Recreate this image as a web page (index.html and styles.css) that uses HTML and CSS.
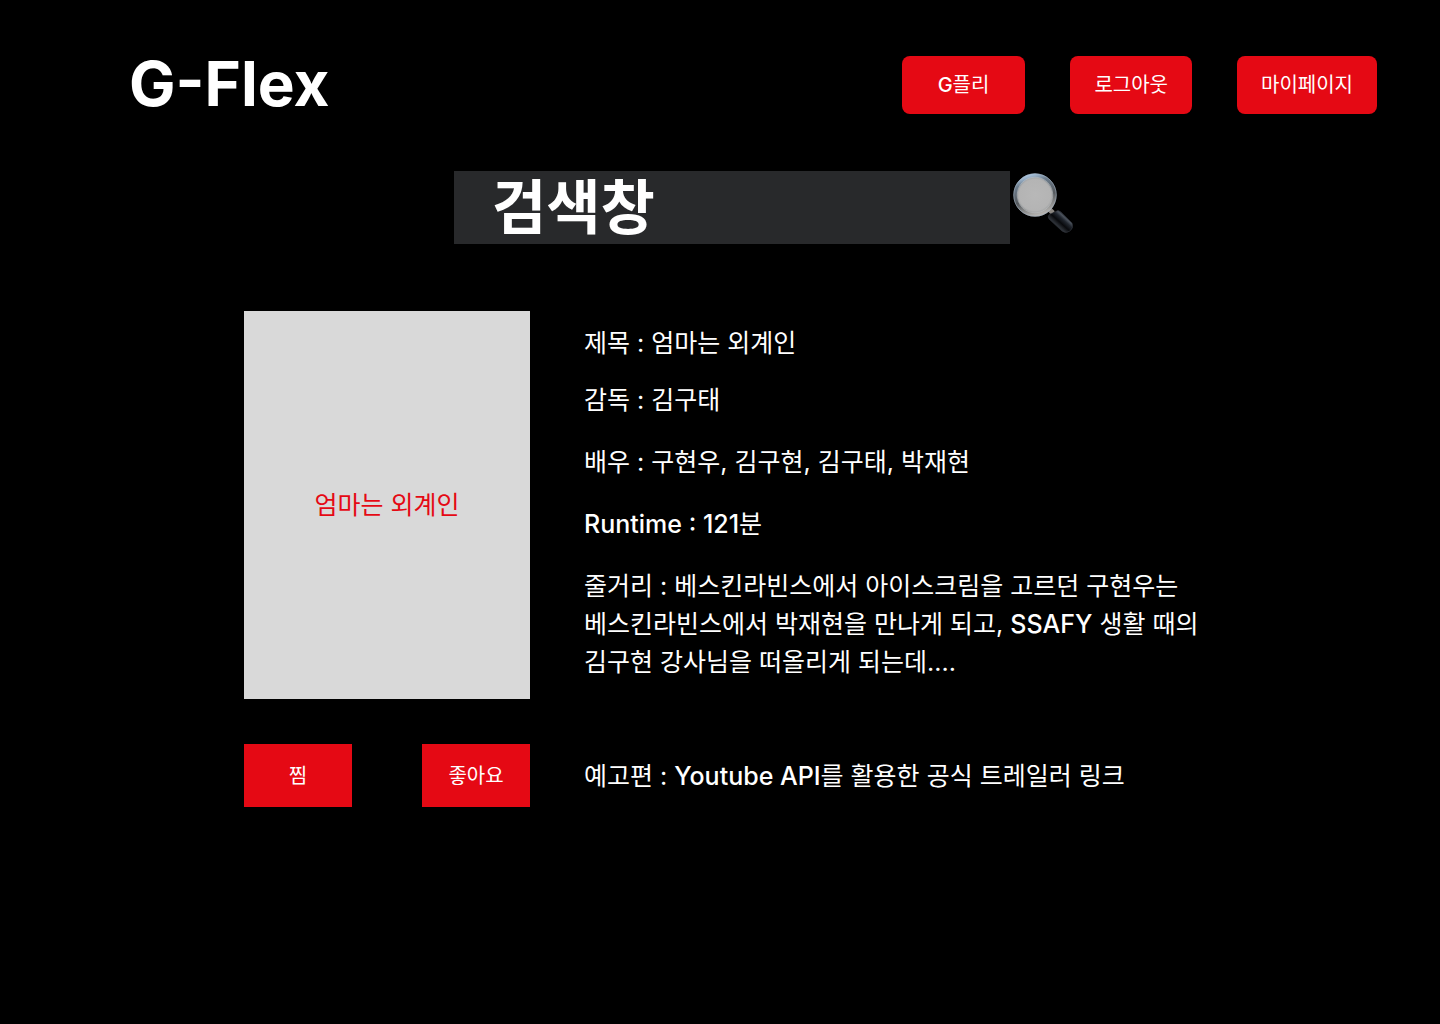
FILE: index.html
```html
<!DOCTYPE html>
<html lang="ko">
<head>
<meta charset="utf-8">
<title>G-Flex</title>
<link rel="stylesheet" href="styles.css">
</head>
<body>
<header class="header">
  <h1 class="logo">G-Flex</h1>
  <nav class="nav">
    <button class="nav-button nav-button-picks" type="button"><span class="latin">G</span>플리</button>
    <button class="nav-button" type="button">로그아웃</button>
    <button class="nav-button" type="button">마이페이지</button>
  </nav>
</header>
<main>
  <form class="search">
    <input class="search-input" type="text" aria-label="검색" value="검색창">
    <button class="search-button" type="button" aria-label="검색하기">
      <svg class="search-icon" viewBox="0 0 64 64" aria-hidden="true">
        <defs>
          <linearGradient id="rim" x1="0.3" y1="0" x2="0.6" y2="1">
            <stop offset="0" stop-color="#a9c4de"/>
            <stop offset=".2" stop-color="#6c7c8c"/>
            <stop offset=".6" stop-color="#55595d"/>
            <stop offset="1" stop-color="#b5b3b0"/>
          </linearGradient>
          <linearGradient id="handle" gradientUnits="userSpaceOnUse" x1="47" y1="54" x2="56" y2="44">
            <stop offset="0" stop-color="#2c3036"/>
            <stop offset=".3" stop-color="#08090c"/>
            <stop offset=".6" stop-color="#20252d"/>
            <stop offset=".8" stop-color="#4b525c"/>
            <stop offset="1" stop-color="#14171c"/>
          </linearGradient>
          <radialGradient id="glass">
            <stop offset="0" stop-color="#b8b8b8"/>
            <stop offset=".8" stop-color="#b4b4b4"/>
            <stop offset="1" stop-color="#999c9e"/>
          </radialGradient>
        </defs>
        <path d="M38 37l5 5" stroke="#8b8782" stroke-width="5"/>
        <path d="M45 41q3-3 6 0l11 11q2 5-2 8-4 3-8 0L39 48q-2-3 1-5z" fill="url(#handle)" stroke="#30343a" stroke-width=".6"/>
        <circle cx="25" cy="24" r="19.5" fill="url(#glass)" stroke="url(#rim)" stroke-width="4"/>
        <circle cx="25" cy="24" r="21.3" fill="none" stroke="#a1b2c3" stroke-width=".6"/>
        <circle cx="25" cy="24" r="17.8" fill="none" stroke="#c4c8ca" stroke-width=".5"/>
      </svg>
    </button>
  </form>
  <section class="movie">
    <div class="poster">엄마는 외계인</div>
    <div class="details">
      <p class="title">제목 : 엄마는 외계인</p>
      <p>감독 : 김구태</p>
      <p>배우 : 구현우, 김구현, 김구태, 박재현</p>
      <p><span class="latin">Runtime : 121</span>분</p>
      <p>줄거리 : 베스킨라빈스에서 아이스크림을 고르던 구현우는 베스킨라빈스에서 박재현을 만나게 되고, <span class="latin">SSAFY</span> 생활 때의 김구현 강사님을 떠올리게 되는데....</p>
    </div>
    <div class="actions">
      <button class="action" type="button">찜</button>
      <button class="action" type="button">좋아요</button>
    </div>
    <p class="trailer">예고편 : <span class="latin">Youtube API</span>를 활용한 공식 트레일러 링크</p>
  </section>
</main>
</body>
</html>
```
FILE: styles.css
```css
* {
  box-sizing: border-box;
}

body {
  margin: 0;
  background: #000;
  color: #fff;
  font: 400 25px/38px Inter, "Noto Sans CJK KR", sans-serif;
}

h1,
p {
  margin: 0;
}

button,
input {
  border: 0;
  border-radius: 0;
  padding: 0;
  color: inherit;
  font: inherit;
}

.latin {
  font-weight: 500;
}

.header {
  display: flex;
  justify-content: space-between;
  align-items: flex-start;
  padding: 56px 63px 0 129px;
}

.logo {
  font-size: 62px;
  font-weight: 700;
  line-height: 56px;
}

.nav {
  display: flex;
  gap: 45px;
}

.nav-button {
  height: 58px;
  padding: 0 24px;
  border-radius: 8px;
  background: #e50914;
  font-size: 20px;
}

.nav-button-picks {
  padding: 0 36px;
}

.search {
  display: flex;
  justify-content: center;
  margin: 57px 0 0 88px;
}

.search-input {
  width: 556px;
  height: 73px;
  padding: 0 38px 8px;
  background: #28292b;
  font-size: 59px;
  font-weight: 700;
}

.search-button {
  width: 64px;
  height: 64px;
  background: none;
}

.search-icon {
  display: block;
  width: 100%;
}

.movie {
  display: grid;
  grid-template-columns: 286px minmax(0, 620px);
  gap: 45px 54px;
  margin: 67px 64px 64px 244px;
}

.poster {
  display: grid;
  place-items: center;
  height: 388px;
  background: #d9d9d9;
  color: #e50914;
}

.details {
  display: grid;
  align-content: start;
  gap: 24px;
  padding-top: 13px;
  word-break: keep-all;
}

.title {
  margin-bottom: -5px;
}

.actions {
  display: flex;
  justify-content: space-between;
}

.action {
  width: 108px;
  height: 63px;
  background: #e50914;
  font-size: 20px;
}

.trailer {
  align-self: center;
}
```
